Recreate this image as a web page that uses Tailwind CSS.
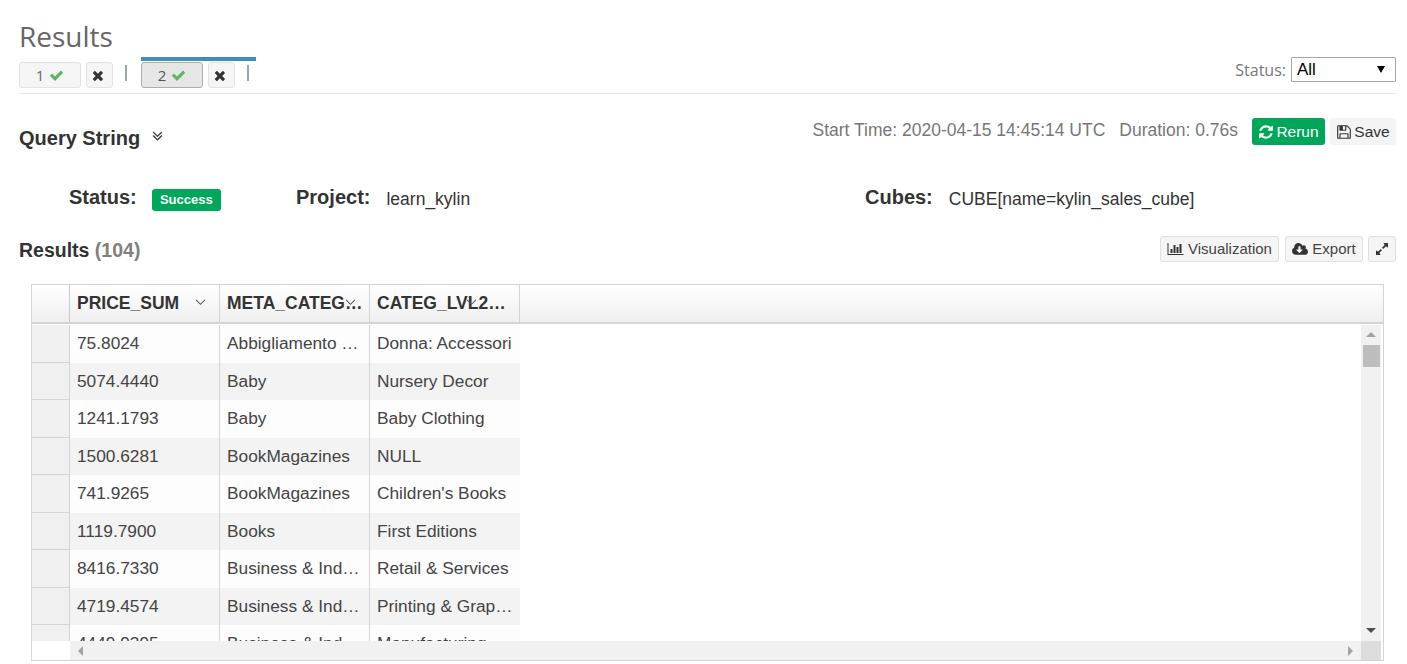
<!DOCTYPE html>
<html>
<head>
<meta charset="utf-8">
<script src="https://cdn.jsdelivr.net/npm/@tailwindcss/browser@4"></script>
</head>
<body class="bg-white overflow-hidden font-['Liberation_Sans',Arial,sans-serif] text-[#333]">
<div class="w-[1407px] h-[664px] overflow-hidden pl-[19px] pr-[11px]">

  <!-- Header -->
  <div class="h-[94px] border-b border-[#e8e8e8] flex justify-between">
    <div class="flex flex-col">
      <h1 class="h-[57px] pt-[16px] text-[28px] leading-[40px] font-['Open_Sans',sans-serif] text-[#666]">Results</h1>
      <div class="flex items-start">
        <div class="flex items-start pt-[5px] w-[122px]">
          <div class="w-[62px] h-[26px] bg-[#f5f5f5] border border-[#e3e3e3] rounded-[3px] flex items-center justify-center gap-[5px] font-['Open_Sans',sans-serif] text-[15px] text-[#666]">1
            <svg viewBox="0 0 1792 1792" class="w-[15px] h-[15px] fill-[#5cb85c]"><path d="M1671 566q0 40-28 68l-724 724-136 136q-28 28-68 28t-68-28l-136-136-362-362q-28-28-28-68t28-68l136-136q28-28 68-28t68 28l294 295 656-657q28-28 68-28t68 28l136 136q28 28 28 68z"/></svg>
          </div>
          <div class="ml-[5px] w-[27px] h-[26px] bg-[#f5f5f5] border border-[#e3e3e3] rounded-[3px] flex items-center justify-center">
            <svg viewBox="0 0 1792 1792" class="w-[15px] h-[15px] fill-[#333]"><path d="M1298 1322q0 40-28 68l-136 136q-28 28-68 28t-68-28l-294-294-294 294q-28 28-68 28t-68-28l-136-136q-28-28-28-68t28-68l294-294-294-294q-28-28-28-68t28-68l136-136q28-28 68-28t68 28l294 294 294-294q28-28 68-28t68 28l136 136q28 28 28 68t-28 68l-294 294 294 294q28 28 28 68z"/></svg>
          </div>
          <div class="ml-[12px] mt-[3px] w-[2px] h-[16px] bg-[#9aa5ad]"></div>
        </div>
        <div class="flex items-start w-[115px] border-t-[4px] border-[#428bba] pt-[1px]">
          <div class="w-[62px] h-[26px] bg-[#e6e6e6] border border-[#adadad] rounded-[3px] flex items-center justify-center gap-[5px] font-['Open_Sans',sans-serif] text-[15px] text-[#555]">2
            <svg viewBox="0 0 1792 1792" class="w-[15px] h-[15px] fill-[#5cb85c]"><path d="M1671 566q0 40-28 68l-724 724-136 136q-28 28-68 28t-68-28l-136-136-362-362q-28-28-28-68t28-68l136-136q28-28 68-28t68 28l294 295 656-657q28-28 68-28t68 28l136 136q28 28 28 68z"/></svg>
          </div>
          <div class="ml-[5px] w-[27px] h-[26px] bg-[#f5f5f5] border border-[#e3e3e3] rounded-[3px] flex items-center justify-center">
            <svg viewBox="0 0 1792 1792" class="w-[15px] h-[15px] fill-[#333]"><path d="M1298 1322q0 40-28 68l-136 136q-28 28-68 28t-68-28l-294-294-294 294q-28 28-68 28t-68-28l-136-136q-28-28-28-68t28-68l294-294-294-294q-28-28-28-68t28-68l136-136q28-28 68-28t68 28l294 294 294-294q28-28 68-28t68 28l136 136q28 28 28 68t-28 68l-294 294 294 294q28 28 28 68z"/></svg>
          </div>
          <div class="ml-[12px] mt-[3px] w-[2px] h-[16px] bg-[#9aa5ad]"></div>
        </div>
      </div>
    </div>
    <div class="flex items-start pt-[57px] gap-[5px]">
      <span class="font-['Open_Sans',sans-serif] text-[16px] leading-[26px] text-[#777]">Status:</span>
      <div class="w-[105px] h-[25px] border border-[#a6a6a6] rounded-[1px] flex items-center justify-between pl-[5px] pr-[10px] text-[17px] text-black">All
        <span class="w-0 h-0 border-l-[4px] border-r-[4px] border-t-[7px] border-l-transparent border-r-transparent border-t-black"></span>
      </div>
    </div>
  </div>

  <!-- Query string row -->
  <div class="h-[75px] flex justify-between items-start">
    <div class="flex items-center gap-[9px] pt-[30px]">
      <h2 class="text-[20px] leading-[28px] font-bold text-[#333]">Query String</h2>
      <svg viewBox="0 0 1792 1792" class="w-[17px] h-[17px] fill-[#333] -mt-[2px]"><path d="M1395 736q0 13-10 23l-466 466q-10 10-23 10t-23-10l-466-466q-10-10-10-23t10-23l50-50q10-10 23-10t23 10l393 393 393-393q10-10 23-10t23 10l50 50q10 10 10 23zm0-384q0 13-10 23l-466 466q-10 10-23 10t-23-10l-466-466q-10-10-10-23t10-23l50-50q10-10 23-10t23 10l393 393 393-393q10-10 23-10t23 10l50 50q10 10 10 23z"/></svg>
    </div>
    <div class="flex items-center pt-[24px]">
      <span class="text-[17.5px] leading-[24px] -mt-[4px] text-[#777]">Start Time: 2020-04-15 14:45:14 UTC</span>
      <span class="text-[17.5px] leading-[24px] -mt-[4px] text-[#777] ml-[14px]">Duration: 0.76s</span>
      <div class="ml-[14px] w-[73px] h-[27px] bg-[#00a65a] rounded-[3px] flex items-center justify-center gap-[2px] text-[15.5px] text-white">
        <svg viewBox="0 0 1792 1792" class="w-[16px] h-[16px] fill-white"><path d="M1639 1056q0 5-1 7-64 268-268 434.5t-478 166.5q-146 0-282.5-55t-243.5-157l-129 129q-19 19-45 19t-45-19-19-45v-448q0-26 19-45t45-19h448q26 0 45 19t19 45-19 45l-137 137q71 66 161 102t187 36q134 0 250-65t186-179q11-17 53-117 8-23 30-23h192q13 0 22.5 9.5t9.5 22.5zm25-800v448q0 26-19 45t-45 19h-448q-26 0-45-19t-19-45 19-45l138-138q-148-137-349-137-134 0-250 65t-186 179q-11 17-53 117-8 23-30 23h-199q-13 0-22.5-9.5t-9.5-22.5v-7q65-268 270-434.5t480-166.5q146 0 284 55.5t245 156.5l130-129q19-19 45-19t45 19 19 45z"/></svg>Rerun
      </div>
      <div class="ml-[5px] w-[66px] h-[27px] bg-[#f4f4f4] rounded-[3px] flex items-center justify-center gap-[2px] text-[15.5px] text-[#333]">
        <svg viewBox="0 0 1792 1792" class="w-[16px] h-[16px] fill-[#333]"><path d="M512 1536h768v-384h-768v384zm896 0h128v-896q0-14-10-38.5t-20-34.5l-281-281q-10-10-34-20t-39-10v416q0 40-28 68t-68 28h-576q-40 0-68-28t-28-68v-416h-128v1280h128v-416q0-40 28-68t68-28h832q40 0 68 28t28 68v416zm-384-928v-320q0-13-9.5-22.5t-22.5-9.5h-192q-13 0-22.5 9.5t-9.5 22.5v320q0 13 9.5 22.5t22.5 9.5h192q13 0 22.5-9.5t9.5-22.5zm640 32v928q0 40-28 68t-68 28h-1344q-40 0-68-28t-28-68v-1344q0-40 28-68t68-28h928q40 0 88 20t76 48l280 280q28 28 48 76t20 88z"/></svg>Save
      </div>
    </div>
  </div>

  <!-- Meta row -->
  <div class="h-[56px] flex items-start pl-[50px] pt-[14px]">
    <div class="w-[227px] flex items-center">
      <span class="text-[20px] leading-[28px] font-bold">Status:</span>
      <span class="ml-[15px] mt-[5px] w-[69px] h-[22px] bg-[#00a65a] rounded-[3px] flex items-center justify-center text-[13px] font-bold text-white">Success</span>
    </div>
    <div class="w-[569px] flex items-center">
      <span class="text-[20px] leading-[28px] font-bold">Project:</span>
      <span class="ml-[16px] text-[17.5px] leading-[20px] mt-[3px]">learn_kylin</span>
    </div>
    <div class="flex items-center">
      <span class="text-[20px] leading-[28px] font-bold">Cubes:</span>
      <span class="ml-[16px] text-[17.5px] leading-[20px] mt-[3px]">CUBE[name=kylin_sales_cube]</span>
    </div>
  </div>

  <!-- Results bar -->
  <div class="h-[59px] flex justify-between items-start">
    <h3 class="text-[19.5px] leading-[28px] font-bold pt-[11px]">Results <span class="text-[#808080]">(104)</span></h3>
    <div class="flex items-start pt-[11px]">
      <div class="w-[119px] h-[26px] bg-[#f5f5f5] border border-[#e0e0e0] rounded-[3px] flex items-center justify-center gap-[4px] text-[15px] text-[#444]">
        <svg viewBox="0 0 2048 1792" class="w-[17px] h-[14px] fill-[#333]"><path d="M640 896v512h-256v-512h256zm384-512v1024h-256v-1024h256zm1024 1152v128h-2048v-1536h128v1408h1920zm-640-896v768h-256v-768h256zm384-384v1152h-256v-1152h256z"/></svg>Visualization
      </div>
      <div class="ml-[6px] w-[78px] h-[26px] bg-[#f5f5f5] border border-[#e0e0e0] rounded-[3px] flex items-center justify-center gap-[4px] text-[15px] text-[#444]">
        <svg viewBox="0 0 1920 1792" class="w-[16px] h-[15px] fill-[#333]"><path d="M1280 928q0-14-9-23t-23-9h-224v-352q0-13-9.5-22.5t-22.5-9.5h-192q-13 0-22.5 9.5t-9.5 22.5v352h-224q-13 0-22.5 9.5t-9.5 22.5q0 14 9 23l352 352q9 9 23 9t23-9l351-351q10-12 10-24zm640 224q0 159-112.5 271.5t-271.5 112.5h-1088q-185 0-316.5-131.5t-131.5-316.5q0-130 70-240t188-165q-2-30-2-43 0-212 150-362t362-150q156 0 285.5 87t188.5 231q71-62 166-62 106 0 181 75t75 181q0 76-41 138 130 31 213.5 135.5t83.5 238.5z"/></svg>Export
      </div>
      <div class="ml-[5px] w-[28px] h-[26px] bg-[#f5f5f5] border border-[#e0e0e0] rounded-[3px] flex items-center justify-center">
        <svg viewBox="0 0 1792 1792" class="w-[14px] h-[14px] fill-[#333]"><path d="M883 1056q0 13-10 23l-332 332 144 144q19 19 19 45t-19 45-45 19h-448q-26 0-45-19t-19-45v-448q0-26 19-45t45-19 45 19l144 144 332-332q10-10 23-10t23 10l114 114q10 10 10 23zm781-864v448q0 26-19 45t-45 19-45-19l-144-144-332 332q-10 10-23 10t-23-10l-114-114q-10-10-10-23t10-23l332-332-144-144q-19-19-19-45t19-45 45-19h448q26 0 45 19t19 45z"/></svg>
      </div>
    </div>
  </div>

  <!-- Grid -->
  <div class="relative ml-[12px] w-[1353px] h-[377px] border border-[#d4d4d4] overflow-hidden text-[17.3px] text-[#444]">
    <!-- Header row -->
    <div class="flex h-[39px] border-b-2 border-[#d4d4d4] bg-gradient-to-b from-white to-[#efefef] font-bold text-[17.5px] text-[#333]">
      <div class="w-[38px] border-r border-[#c8c8c8]"></div>
      <div class="relative w-[150px] pl-[7px] leading-[37px] border-r border-[#d4d4d4]">PRICE_SUM
        <svg viewBox="0 0 12 8" class="absolute right-[13px] top-[14px] w-[11px] h-[7px] fill-none stroke-[#555] stroke-[1.2]"><path d="M1 1l5 5 5-5"/></svg>
      </div>
      <div class="relative w-[150px] pl-[7px] pr-[4px] leading-[37px] border-r border-[#d4d4d4] truncate">META_CATEG_LV0
        <svg viewBox="0 0 12 8" class="absolute right-[13px] top-[14px] w-[11px] h-[7px] fill-none stroke-[#555] stroke-[1.2]"><path d="M1 1l5 5 5-5"/></svg>
      </div>
      <div class="relative w-[150px] pl-[7px] pr-[8px] leading-[37px] border-r border-[#d4d4d4] truncate">CATEG_LVL2_NAME
        <svg viewBox="0 0 12 8" class="absolute right-[42px] top-[14px] w-[11px] h-[7px] fill-none stroke-[#555] stroke-[1.2]"><path d="M1 1l5 5 5-5"/></svg>
      </div>
    </div>
    <!-- Body -->
    <div class="pt-[1px]">
      <div class="flex h-[37.5px] leading-[37px]">
        <div class="w-[38px] bg-[#f0f0f0] border-r border-b border-[#d4d4d4]"></div>
        <div class="w-[150px] pl-[7px] bg-[#fdfdfd] border-r border-[#d4d4d4] truncate">75.8024</div>
        <div class="w-[150px] pl-[7px] pr-[7px] bg-[#fdfdfd] border-r border-[#d4d4d4] truncate">Abbigliamento e accessori</div>
        <div class="w-[150px] pl-[7px] pr-[7px] bg-[#fdfdfd] truncate">Donna: Accessori</div>
      </div>
      <div class="flex h-[37.5px] leading-[37px]">
        <div class="w-[38px] bg-[#f0f0f0] border-r border-b border-[#d4d4d4]"></div>
        <div class="w-[150px] pl-[7px] bg-[#f3f3f3] border-r border-[#d4d4d4] truncate">5074.4440</div>
        <div class="w-[150px] pl-[7px] pr-[7px] bg-[#f3f3f3] border-r border-[#d4d4d4] truncate">Baby</div>
        <div class="w-[150px] pl-[7px] pr-[7px] bg-[#f3f3f3] truncate">Nursery Decor</div>
      </div>
      <div class="flex h-[37.5px] leading-[37px]">
        <div class="w-[38px] bg-[#f0f0f0] border-r border-b border-[#d4d4d4]"></div>
        <div class="w-[150px] pl-[7px] bg-[#fdfdfd] border-r border-[#d4d4d4] truncate">1241.1793</div>
        <div class="w-[150px] pl-[7px] pr-[7px] bg-[#fdfdfd] border-r border-[#d4d4d4] truncate">Baby</div>
        <div class="w-[150px] pl-[7px] pr-[7px] bg-[#fdfdfd] truncate">Baby Clothing</div>
      </div>
      <div class="flex h-[37.5px] leading-[37px]">
        <div class="w-[38px] bg-[#f0f0f0] border-r border-b border-[#d4d4d4]"></div>
        <div class="w-[150px] pl-[7px] bg-[#f3f3f3] border-r border-[#d4d4d4] truncate">1500.6281</div>
        <div class="w-[150px] pl-[7px] pr-[7px] bg-[#f3f3f3] border-r border-[#d4d4d4] truncate">BookMagazines</div>
        <div class="w-[150px] pl-[7px] pr-[7px] bg-[#f3f3f3] truncate">NULL</div>
      </div>
      <div class="flex h-[37.5px] leading-[37px]">
        <div class="w-[38px] bg-[#f0f0f0] border-r border-b border-[#d4d4d4]"></div>
        <div class="w-[150px] pl-[7px] bg-[#fdfdfd] border-r border-[#d4d4d4] truncate">741.9265</div>
        <div class="w-[150px] pl-[7px] pr-[7px] bg-[#fdfdfd] border-r border-[#d4d4d4] truncate">BookMagazines</div>
        <div class="w-[150px] pl-[7px] pr-[7px] bg-[#fdfdfd] truncate">Children's Books</div>
      </div>
      <div class="flex h-[37.5px] leading-[37px]">
        <div class="w-[38px] bg-[#f0f0f0] border-r border-b border-[#d4d4d4]"></div>
        <div class="w-[150px] pl-[7px] bg-[#f3f3f3] border-r border-[#d4d4d4] truncate">1119.7900</div>
        <div class="w-[150px] pl-[7px] pr-[7px] bg-[#f3f3f3] border-r border-[#d4d4d4] truncate">Books</div>
        <div class="w-[150px] pl-[7px] pr-[7px] bg-[#f3f3f3] truncate">First Editions</div>
      </div>
      <div class="flex h-[37.5px] leading-[37px]">
        <div class="w-[38px] bg-[#f0f0f0] border-r border-b border-[#d4d4d4]"></div>
        <div class="w-[150px] pl-[7px] bg-[#fdfdfd] border-r border-[#d4d4d4] truncate">8416.7330</div>
        <div class="w-[150px] pl-[7px] pr-[7px] bg-[#fdfdfd] border-r border-[#d4d4d4] truncate">Business &amp; Industrial</div>
        <div class="w-[150px] pl-[7px] pr-[7px] bg-[#fdfdfd] truncate">Retail &amp; Services</div>
      </div>
      <div class="flex h-[37.5px] leading-[37px]">
        <div class="w-[38px] bg-[#f0f0f0] border-r border-b border-[#d4d4d4]"></div>
        <div class="w-[150px] pl-[7px] bg-[#f3f3f3] border-r border-[#d4d4d4] truncate">4719.4574</div>
        <div class="w-[150px] pl-[7px] pr-[7px] bg-[#f3f3f3] border-r border-[#d4d4d4] truncate">Business &amp; Industrial</div>
        <div class="w-[150px] pl-[7px] pr-[7px] bg-[#f3f3f3] truncate">Printing &amp; Graphic Arts</div>
      </div>
      <div class="flex h-[37.5px] leading-[37px]">
        <div class="w-[38px] bg-[#f0f0f0] border-r border-[#d4d4d4]"></div>
        <div class="w-[150px] pl-[7px] bg-[#fdfdfd] border-r border-[#d4d4d4] truncate">4449.9395</div>
        <div class="w-[150px] pl-[7px] pr-[7px] bg-[#fdfdfd] border-r border-[#d4d4d4] truncate">Business &amp; Industrial</div>
        <div class="w-[150px] pl-[7px] pr-[7px] bg-[#fdfdfd] truncate">Manufacturing</div>
      </div>
    </div>

    <!-- Vertical scrollbar -->
    <div class="absolute right-[2px] top-[40px] bottom-[19px] w-[20px] bg-[#f1f1f1] flex flex-col items-center">
      <span class="mt-[7px] w-0 h-0 border-l-[5px] border-r-[5px] border-b-[5px] border-l-transparent border-r-transparent border-b-[#a3a3a3]"></span>
      <div class="mt-[8px] w-[17px] h-[22px] bg-[#bdbdbd]"></div>
      <span class="mt-auto mb-[8px] w-0 h-0 border-l-[5px] border-r-[5px] border-t-[5px] border-l-transparent border-r-transparent border-t-[#505050]"></span>
    </div>
    <!-- Bottom strip: blank gutter, horizontal scrollbar, corner -->
    <div class="absolute left-0 right-[2px] bottom-0 h-[19px] flex bg-white">
      <div class="w-[38px]"></div>
      <div class="flex-1 bg-[#f1f1f1] flex items-center justify-between pl-[8px] pr-[8px]">
        <span class="w-0 h-0 border-t-[5px] border-b-[5px] border-r-[5px] border-t-transparent border-b-transparent border-r-[#a3a3a3]"></span>
        <span class="w-0 h-0 border-t-[5px] border-b-[5px] border-l-[5px] border-t-transparent border-b-transparent border-l-[#a3a3a3]"></span>
      </div>
      <div class="w-[20px] bg-[#dcdcdc]"></div>
    </div>
  </div>
</div>
</body>
</html>
